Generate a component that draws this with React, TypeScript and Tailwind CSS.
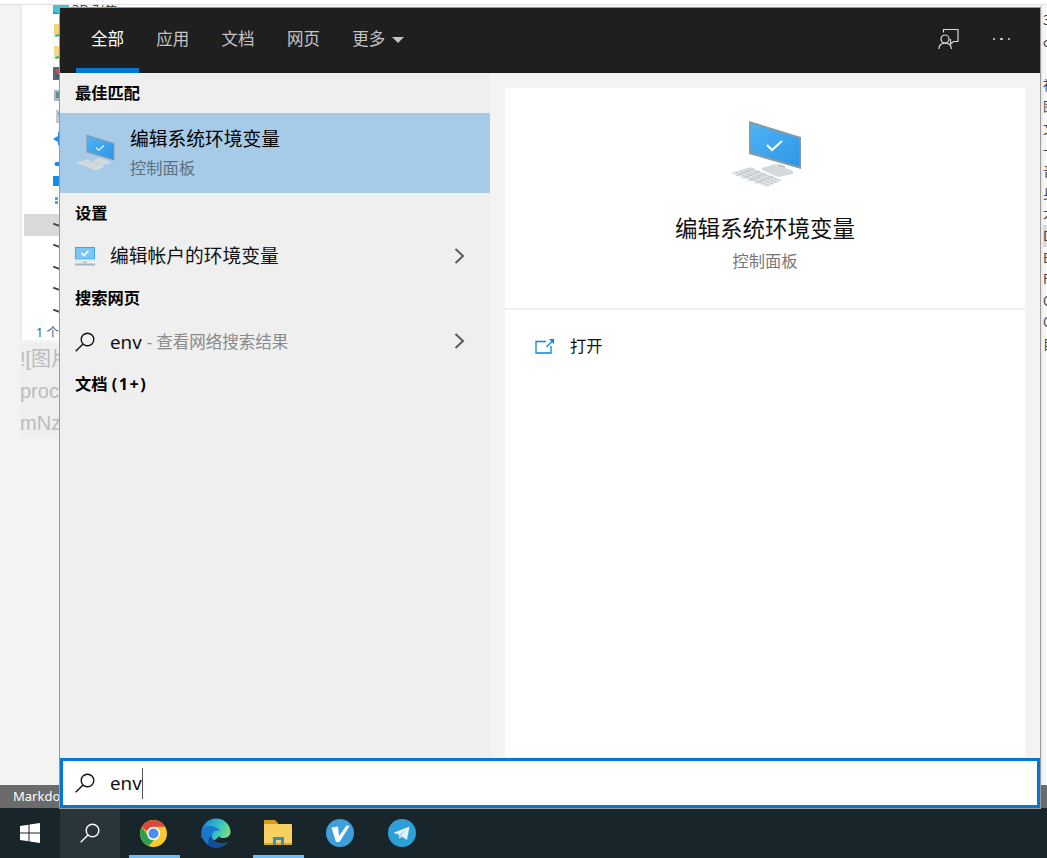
const TABS = ["全部", "应用", "文档", "网页"];
const RIGHT_EDGE = ["3", "c", "", "社", "图", "文", "一", "音", "身", "才", "D", "E", "F", "C", "C", "目"];

// what shows of the explorer tree icons to the left of the search popup
const TREE_ICONS = [
  <><rect x="0" y="0" width="16" height="11" fill="#45c4d4" /><polygon points="0,8 8,11 0,11" fill="#2a9fc0" /></>,
  <><rect x="1" y="0" width="15" height="10" fill="#f2d27a" /><polygon points="1,11 8,9 8,12 3,13" fill="#5cb85c" /></>,
  <><rect x="1" y="0" width="15" height="10" fill="#f2d98a" /><polygon points="1,11 8,9 8,12 3,13" fill="#5cb85c" /></>,
  <><rect x="0" y="0" width="16" height="13" fill="#5a6570" /><rect x="3" y="2" width="5" height="5" fill="#b5524f" /><rect x="3" y="8" width="5" height="3" fill="#2f5f8f" /></>,
  <><rect x="1" y="1" width="15" height="11" fill="#a8b6c0" /><rect x="3" y="3" width="8" height="6" fill="#5f8f80" /></>,
  <><rect x="3" y="0" width="13" height="13" fill="#c9c9c9" /><rect x="5" y="2" width="4" height="3" fill="#6fa8d8" /></>,
  <polygon points="0,7 5,4 5,0 8,0 8,13 5,13 5,10" fill="#2b86d8" />,
  <><rect x="6" y="0" width="3" height="11" fill="#2b86d8" /><ellipse cx="5" cy="11" rx="3.5" ry="2.2" fill="#2b86d8" /></>,
  <rect x="0" y="1" width="16" height="10" fill="#1c8be0" />,
  <><rect x="2" y="1" width="3" height="3" fill="#33b5e5" /><rect x="6" y="1" width="3" height="3" fill="#33b5e5" /><rect x="2" y="5" width="3" height="3" fill="#33b5e5" /><rect x="6" y="5" width="3" height="3" fill="#33b5e5" /></>,
];

function SearchIcon({ color, size = 20 }: { color: string; size?: number }) {
  return (
    <svg width={size} height={size} viewBox="0 0 20 20" fill="none" stroke={color} strokeWidth="1.4">
      <circle cx="12.5" cy="7.5" r="6.3" />
      <path d="M8 12 L0.7 19.3" />
    </svg>
  );
}

function RowChevron() {
  return (
    <svg width="11" height="16" viewBox="0 0 11 16" fill="none" stroke="#5a5a5a" strokeWidth="2" className="ml-auto mr-[25px]">
      <path d="M1.5 1 L9 8 L1.5 15" />
    </svg>
  );
}

// Large "this PC" picture used for the best match
function ComputerIcon({ width, height }: { width: number; height: number }) {
  return (
    <svg width={width} height={height} viewBox="78 20 74 70">
      <defs>
        <linearGradient id="screenBlue" x1="0" y1="0" x2="1" y2="1">
          <stop offset="0%" stopColor="#4db4f5" />
          <stop offset="100%" stopColor="#2f96e8" />
        </linearGradient>
      </defs>
      <polygon points="99,21 151,37 151,69 99,54" fill="#8a9aa5" />
      <polygon points="100.5,23.5 149.5,38.5 149.5,66.5 100.5,52" fill="url(#screenBlue)" />
      <path d="M117 45 L122 50 L132 41" fill="none" stroke="#fff" strokeWidth="2.2" />
      <polygon points="128,64 135,66 135,72 128,71" fill="#b6c2c8" />
      <polygon points="112,68 125,64 143,71 143,74 128,77 112,70" fill="#d2dade" />
      <polygon points="80,73 100,67 132,80 117,87" fill="#e2e6e8" />
      <path d="M85 72 L119 85.5 M89 70.5 L123 84 M93 69.5 L127 82.5 M97 68 L130 81 M86 76 L104 68.5 M92 78.5 L110 71 M98 81 L116 73.5 M105 83.5 L123 76" stroke="#b4bcc1" strokeWidth="0.7" />
    </svg>
  );
}

function SettingsMonitor() {
  return (
    <svg width="20" height="20" viewBox="0 0 20 20">
      <rect x="0" y="1" width="20" height="12.5" fill="#3fa9ee" />
      <rect x="1" y="2" width="18" height="10.5" fill="#7cc6f5" />
      <path d="M6.5 7 L9 9.5 L13.5 4.8" fill="none" stroke="#fff" strokeWidth="1.6" />
      <rect x="0" y="13.5" width="20" height="2" fill="#dfe5e8" />
      <rect x="8" y="15.5" width="4" height="1.5" fill="#b9c5cc" />
      <rect x="0" y="17.5" width="20" height="2" fill="#9fb6c6" />
    </svg>
  );
}

function PersonFeedback() {
  return (
    <svg width="22" height="22" viewBox="0 0 22 22" fill="none" stroke="#d8d8d8" strokeWidth="1.2">
      <path d="M5.5 4.5 V1.5 H20 V13.5 H15.5 L12.5 16 V11" />
      <circle cx="7" cy="11" r="4" fill="#1f1f1f" />
      <path d="M0.8 21 C1.2 17 3.8 15.2 7 15.2 C10.2 15.2 13 17 13.6 21" />
    </svg>
  );
}

function OpenIcon() {
  return (
    <svg width="20" height="16" viewBox="0 0 20 16" fill="none" stroke="#0a84e0" strokeWidth="1.3">
      <path d="M11 3.5 H1 V15 H16 V8" />
      <path d="M11.5 9 L18 2.5" />
      <path d="M14 1 H19 V6 Z" fill="#0a84e0" stroke="none" />
    </svg>
  );
}

function WindowsLogo() {
  return (
    <svg width="20" height="20" viewBox="0 0 20 20" fill="#fff">
      <polygon points="0,3 8.5,1.7 8.5,9.5 0,9.5" />
      <polygon points="9.5,1.5 20,0 20,9.5 9.5,9.5" />
      <polygon points="0,10.5 8.5,10.5 8.5,18.3 0,17" />
      <polygon points="9.5,10.5 20,10.5 20,20 9.5,18.5" />
    </svg>
  );
}

function ChromeLogo() {
  return (
    <svg width="27" height="27" viewBox="0 0 28 28" className="mr-[2px]">
      <circle cx="14" cy="14" r="14" fill="#fbc931" />
      <path d="M14 0 A14 14 0 0 1 26.1 7 H14 A7 7 0 0 0 7.4 11.8 L2 7 A14 14 0 0 1 14 0Z" fill="#d9493c" />
      <path d="M1.9 7 L8 16 A7 7 0 0 0 14 21 L9 27 A14 14 0 0 1 1.9 7Z" fill="#2f9e50" />
      <path d="M9 27 L14 21 A7 7 0 0 0 20 17 L26.5 20 A14 14 0 0 1 14 28 A14 14 0 0 1 9 27Z" fill="#2f9e50" opacity="0" />
      <circle cx="14" cy="14" r="6.8" fill="#fff" />
      <circle cx="14" cy="14" r="5.3" fill="#4f8df0" />
    </svg>
  );
}

function EdgeLogo() {
  return (
    <svg width="30" height="30" viewBox="0 0 30 30" className="mr-[1px]">
      <defs>
        <linearGradient id="edgeTop" x1="0" y1="0.3" x2="1" y2="0.6">
          <stop offset="0%" stopColor="#1a86d8" />
          <stop offset="55%" stopColor="#2fc0c8" />
          <stop offset="100%" stopColor="#7ee07a" />
        </linearGradient>
      </defs>
      <path d="M0.5 15 C0.5 7 7 0.5 15 0.5 C23 0.5 29.5 6.5 29.5 14 C29.5 18 26 20 22 20 C20 20 18 19.5 18.5 18 L14 22 L0.5 20Z" fill="url(#edgeTop)" />
      <path d="M0.5 13 C0 22 7 29.5 15 29.5 C20 29.5 24.5 27.5 27 24 C21 26.5 13 25.5 11 20 C9.5 15 14 11 19.5 13 C14 7 3 6 0.5 13Z" fill="#1a78cc" />
      <path d="M11 20 C13 25.5 21 26.5 27 24 C24.5 27.5 20 29.5 15 29.5 C12 29.5 9 28 7 26 C7 22 8 19 11 17 C10.7 18 10.7 19 11 20Z" fill="#0f4f98" />
    </svg>
  );
}

function FolderLogo() {
  return (
    <svg width="28" height="26" viewBox="0 0 28 26" className="mr-[1px]">
      <path d="M0 1 C0 0.4 0.4 0 1 0 H11 L14 3 V6 H0Z" fill="#d99a1c" />
      <rect x="0" y="4" width="28" height="21" rx="1" fill="#f7d15f" />
      <rect x="0" y="23" width="28" height="2" fill="#d9a62e" />
      <path d="M9 24.8 V17 H20 V24.8 H17 V20 H12 V24.8Z" fill="#2f8fdc" />
    </svg>
  );
}

function VLogo() {
  return (
    <svg width="28" height="28" viewBox="0 0 28 28" className="mr-[1px]">
      <circle cx="14" cy="14" r="14" fill="#3f9fdc" />
      <path d="M5.5 8.5 L12 7.5 L13 17 L20.5 6.5 L23.5 7 L13.5 23 L10 23Z" fill="#fff" />
    </svg>
  );
}

function TelegramLogo() {
  return (
    <svg width="28" height="28" viewBox="0 0 28 28" className="mr-[1px]">
      <circle cx="14" cy="14" r="14" fill="#2f9fd8" />
      <path d="M5.5 13.8 L21.5 7.5 L19 21 L13.8 17.6 L11.5 19.8 L11 15.8Z" fill="#e3f2fa" />
      <path d="M11 15.8 L19 9.8 L13.2 16.6 L11.5 19.8Z" fill="#b3d9ec" />
    </svg>
  );
}

function ExplorerBackground() {
  return (
    <div className="w-[160px] shrink-0 flex flex-col">
      <div className="ml-[20px] h-[335px] border-l-[2px] border-[#ececec] bg-white overflow-hidden">
        <div className="-mt-[6px]">
          {TREE_ICONS.map((icon, i) => (
            <div key={i} className="h-[21.5px] flex items-center pl-[31px] gap-[2px]">
              <svg width="16" height="14" viewBox="0 0 16 14" className="shrink-0">{icon}</svg>
              {i === 0 && <span className="text-[13px] text-[#444] ml-[1px]">3D 对象</span>}
            </div>
          ))}
          {[0, 1, 2, 3, 4].map((i) => (
            <div
              key={i}
              className={i === 0 ? "h-[21.5px] ml-[2px] flex items-center pl-[29px] bg-[#d9d9d9]" : "h-[21.5px] ml-[2px] flex items-center pl-[29px]"}
            >
              <div className="w-[8px] h-[2px] bg-[#444] rotate-[20deg]" />
            </div>
          ))}
          <div className="h-[18px] pl-[14px] pt-[2px] text-[12.5px] leading-[18px] text-[#3a5f8a] whitespace-nowrap">1 个项目</div>
        </div>
      </div>
      <div className="ml-[20px] mt-[3px] h-[95px] bg-[#efefef] text-[20px] leading-[32px] text-[#bcbcbc] font-['Liberation_Sans','Noto_Sans_CJK_SC',sans-serif] whitespace-nowrap">
        <div>![图片</div>
        <div>proc</div>
        <div>mNz</div>
      </div>
    </div>
  );
}

function SectionHeading({ children }: { children: React.ReactNode }) {
  return <div className="h-[40px] pl-[15px] flex items-center text-[16.25px] font-bold text-black">{children}</div>;
}

function SearchPopup() {
  return (
    <div className="absolute left-[59px] top-[7px] w-[982px] h-[802px] border border-[#9a9a9a] flex flex-col">
      {/* tab bar */}
      <div className="h-[65px] shrink-0 bg-[#1f1f1f] flex items-stretch pl-[16px] pr-[30px]">
        {TABS.map((t, i) => (
          <div
            key={t}
            className={
              i === 0
                ? "w-[63px] mr-[2.3px] pl-[15px] pb-[2px] flex items-center text-[16.5px] text-white border-b-[5px] border-[#0078d7] border-t-[5px] border-t-transparent"
                : "w-[63px] mr-[2.3px] pl-[15px] pb-[2px] flex items-center text-[16.5px] text-[#c4c4c4] border-y-[5px] border-transparent"
            }
          >
            {t}
          </div>
        ))}
        <div className="pl-[15px] pb-[2px] flex items-center gap-[7px] text-[16.5px] text-[#c4c4c4]">
          更多
          <div className="w-0 h-0 border-x-[6px] border-x-transparent border-t-[6px] border-t-[#c4c4c4]" />
        </div>
        <div className="ml-auto pb-[3px] flex items-center gap-[33px]">
          <div className="-ml-[2px]"><PersonFeedback /></div>
          <div className="flex gap-[5px]">
            <div className="w-[2.5px] h-[2.5px] rounded-full bg-[#d8d8d8]" />
            <div className="w-[2.5px] h-[2.5px] rounded-full bg-[#d8d8d8]" />
            <div className="w-[2.5px] h-[2.5px] rounded-full bg-[#d8d8d8]" />
          </div>
        </div>
      </div>

      {/* results */}
      <div className="flex-1 flex min-h-0">
        <div className="w-[430px] shrink-0 bg-[#efefef]">
          <SectionHeading>最佳匹配</SectionHeading>
          <div className="h-[80px] bg-[#a6cbe8] flex items-center pl-[15px]">
            <ComputerIcon width={40} height={38} />
            <div className="ml-[15px]">
              <div className="text-[18.75px] leading-[28px] text-black">编辑系统环境变量</div>
              <div className="text-[16.25px] leading-[26px] text-[#5f6f7c] mt-[2px]">控制面板</div>
            </div>
          </div>
          <SectionHeading>设置</SectionHeading>
          <div className="h-[45px] flex items-center pl-[15px]">
            <SettingsMonitor />
            <span className="ml-[15px] pt-[2px] text-[18.75px] text-[#111]">编辑帐户的环境变量</span>
            <RowChevron />
          </div>
          <SectionHeading>搜索网页</SectionHeading>
          <div className="h-[45px] flex items-center pl-[15px]">
            <div className="pt-[2px]"><SearchIcon color="#111" /></div>
            <span className="ml-[15px] pt-[4px] text-[18.75px] text-[#111]">env</span>
            <span className="ml-[5px] pt-[4px] text-[16.5px] text-[#8a8a8a]">- 查看网络搜索结果</span>
            <RowChevron />
          </div>
          <SectionHeading>
            <span className="pt-[2px]">文档 <span className="tracking-[1.5px]">(1+)</span></span>
          </SectionHeading>
        </div>

        <div className="flex-1 bg-[#f3f3f3] pl-[15px] pr-[15px] pt-[15px] pb-[1px] flex">
          <div className="flex-1 bg-white flex flex-col">
            <div className="h-[222px] shrink-0 flex flex-col items-center pt-[32px] border-b-[2px] border-[#f0f0f0]">
              <ComputerIcon width={74} height={70} />
              <div className="mt-[23px] text-[22.5px] leading-[32px] text-[#111]">编辑系统环境变量</div>
              <div className="mt-[3px] text-[16.25px] leading-[26px] text-[#777]">控制面板</div>
            </div>
            <div className="pl-[30px] pt-[24px] flex items-center gap-[15px]">
              <OpenIcon />
              <span className="text-[16.25px] leading-[24px] text-[#111]">打开</span>
            </div>
          </div>
        </div>
      </div>

      {/* search box */}
      <div className="h-[50px] shrink-0 bg-white border-[3px] border-[#0078d7] flex items-center pl-[12px]">
        <SearchIcon color="#111" />
        <span className="ml-[15px] text-[18.75px] text-[#111]">env</span>
        <div className="w-[1.5px] h-[31px] bg-[#555]" />
      </div>
    </div>
  );
}

export default function App() {
  return (
    <div className="relative w-[1047px] h-[858px] overflow-hidden bg-[#f3f3f3] flex flex-col font-['Noto_Sans','Noto_Sans_CJK_SC',sans-serif]">
      <div className="h-[5px] shrink-0 bg-white border-b border-[#e2e2e2]" />
      <div className="flex-1 flex justify-between min-h-0">
        <ExplorerBackground />
        <div className="w-[7px] shrink-0 border-l-[3px] border-[#ececec] pt-[4px] bg-[#f7f7f7] overflow-hidden font-['Noto_Sans_CJK_SC',sans-serif]">
          {RIGHT_EDGE.map((c, i) => (
            <div key={i} className={c === "D" ? "h-[21.6px] text-[13px] leading-[21.6px] text-[#444] bg-[#d9d9d9]" : "h-[21.6px] text-[13px] leading-[21.6px] text-[#444]"}>
              {c}
            </div>
          ))}
        </div>
      </div>
      <div className="h-[23px] shrink-0 bg-[#6b6b6b] pl-[13px] text-[13px] leading-[23px] text-white">Markdown</div>
      <div className="h-[50px] shrink-0 bg-[#18252a] flex items-stretch">
        <div className="w-[60px] flex items-center justify-center"><WindowsLogo /></div>
        <div className="w-[60px] flex items-center justify-center bg-[#2a3539]"><SearchIcon color="#fff" /></div>
        <div className="w-[9px]" />
        <div className="w-[51px] mr-[11px] flex items-center justify-center border-b-[3px] border-[#76b9ed] border-t-[3px] border-t-transparent"><ChromeLogo /></div>
        <div className="w-[51px] mr-[11px] flex items-center justify-center"><EdgeLogo /></div>
        <div className="w-[51px] mr-[11px] flex items-center justify-center border-b-[3px] border-[#76b9ed] border-t-[3px] border-t-transparent"><FolderLogo /></div>
        <div className="w-[51px] mr-[11px] flex items-center justify-center"><VLogo /></div>
        <div className="w-[51px] flex items-center justify-center"><TelegramLogo /></div>
      </div>
      <SearchPopup />
    </div>
  );
}
